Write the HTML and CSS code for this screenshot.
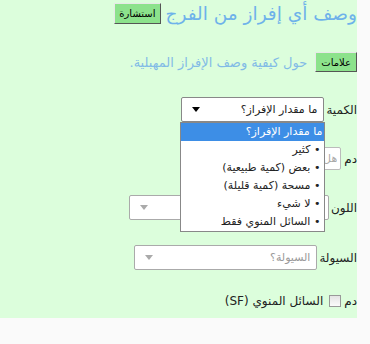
FILE: index.html
```html
<!DOCTYPE html>
<html lang="ar">
<head>
   <meta charset="utf-8" />
   <title>وصف أي إفراز من الفرج</title>
   <link rel="stylesheet" href="styles.css">
</head>
<body>
   <div class="page" dir="rtl">
       <div class="row title-row">
           <h1 class="title">وصف أي إفراز من الفرج</h1>
           <button class="btn">استشارة</button>
       </div>
       <div class="row help-row">
           <button class="btn">علامات</button>
           <span class="help">حول كيفية وصف الإفراز المهبلية.</span>
       </div>
       <div class="row field">
           <label class="label">الكمية</label>
           <div class="select select-qty">
               <span class="value">ما مقدار الإفراز؟</span>
               <span class="arrow"></span>
               <ul class="dropdown">
                   <li class="active">ما مقدار الإفراز؟</li>
                   <li>• كثير</li>
                   <li>• بعض (كمية طبيعية)</li>
                   <li>• مسحة (كمية قليلة)</li>
                   <li>• لا شيء</li>
                   <li>• السائل المنوي فقط</li>
               </ul>
           </div>
       </div>
       <div class="row field field-blood">
           <label class="label">دم</label>
           <input class="text-input" type="text" placeholder="هل يوجد دم؟" />
       </div>
       <div class="row field">
           <label class="label">اللون</label>
           <div class="select select-color">
               <span class="value placeholder"></span>
               <span class="arrow grey"></span>
           </div>
       </div>
       <div class="row field">
           <label class="label">السيولة</label>
           <div class="select select-fluid">
               <span class="value placeholder">السيولة؟</span>
               <span class="arrow grey"></span>
           </div>
       </div>
       <div class="row check-row">
           <label class="label">دم</label>
           <span class="checkbox"></span>
           <span class="check-text">السائل المنوي (SF)</span>
       </div>
   </div>
</body>
</html>
```

FILE: styles.css
```css
body, html {
    margin: 0;
    background-color: #fafafa;
}
.page {
    width: 357px;
    height: 318px;
    background-color: #dcfedc;
    font-family: "DejaVu Sans", sans-serif;
    font-size: 12px;
    color: #222;
    display: flex;
    flex-direction: column;
    gap: 25px;
}
.row {
    display: flex;
    align-items: center;
}
.title-row {
    height: 27px;
    gap: 5px;
}
.title {
    margin: 0;
    font-size: 18.5px;
    font-weight: normal;
    color: #6eb2ea;
}
.btn {
    background-color: #8ce28c;
    border: 1px solid #555;
    border-top-color: #e8e8e8;
    border-left-color: #e8e8e8;
    font-family: "DejaVu Sans", sans-serif;
    font-size: 10px;
    color: #000;
    padding: 0 4px;
    height: 21px;
    margin: 0;
}
.help-row {
    height: 20px;
    gap: 8px;
}
.help-row .btn {
    height: 20px;
    padding: 0 5px;
}
.help {
    color: #82bbe6;
    font-size: 13px;
}
.field {
    height: 25px;
    gap: 2px;
}
.label {
    font-size: 12px;
    color: #222;
}
.select {
    position: relative;
    box-sizing: border-box;
    height: 25px;
    background-color: #fff;
    border: 1px solid #aaa;
    border-radius: 2px;
    display: flex;
    align-items: center;
    padding: 0 6px 0 10px;
    font-size: 11px;
}
.select .value {
    flex: 1;
}
.select .placeholder {
    color: #999;
}
.arrow {
    width: 0;
    height: 0;
    border-left: 4px solid transparent;
    border-right: 4px solid transparent;
    border-top: 5px solid #000;
}
.arrow.grey {
    border-top-color: #aaa;
}
.select-qty {
    width: 143px;
    border-color: #888;
}
.select-color {
    width: 200px;
}
.select-fluid {
    width: 183px;
}
.dropdown {
    position: absolute;
    top: 24px;
    right: -2px;
    width: 145px;
    box-sizing: border-box;
    margin: 0;
    padding: 0;
    list-style: none;
    background-color: #fff;
    border: 1px solid #888;
    z-index: 2;
}
.dropdown li {
    height: 18px;
    line-height: 18px;
    padding: 0 4px 0 0;
    white-space: nowrap;
}
.dropdown li.active {
    background-color: #3d8ee6;
    color: #fff;
    padding-right: 2px;
}
.field-blood {
    height: 23px;
    gap: 3px;
}
.text-input {
    box-sizing: border-box;
    width: 150px;
    height: 23px;
    border: 1px solid #bbb;
    border-radius: 2px;
    font-family: "DejaVu Sans", sans-serif;
    font-size: 11px;
    padding: 0 3px;
    margin: 0;
}
.text-input::placeholder {
    color: #aaa;
}
.check-row {
    height: 12px;
    gap: 3px;
}
.checkbox {
    width: 10px;
    height: 10px;
    border: 1px solid #999;
    background: linear-gradient(#e4e4e4, #fbfbfb);
    margin: 0 0 0 3px;
}
.check-text {
    font-size: 12px;
}
```
